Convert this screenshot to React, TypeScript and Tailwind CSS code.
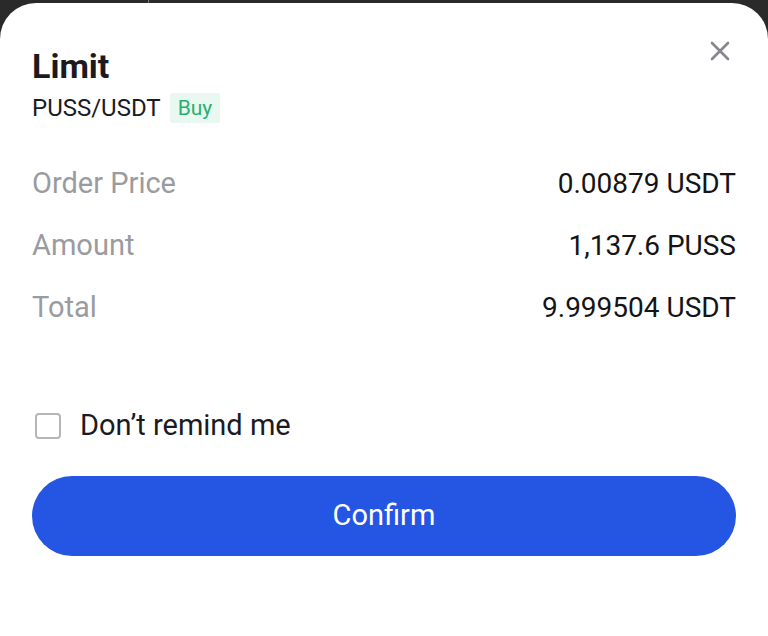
import React from "react";

export default function App() {
  const rows = [
    { label: "Order Price", value: "0.00879 USDT" },
    { label: "Amount", value: "1,137.6 PUSS" },
    { label: "Total", value: "9.999504 USDT" },
  ];
  return (
    <div
      className="relative w-[768px] h-[636px] bg-[#2a2a2a] overflow-hidden"
      style={{ fontFamily: "Roboto, 'Noto Sans', sans-serif" }}
    >
      <div className="absolute left-[148px] top-0 w-[1px] h-[3px] bg-[#777]" />
      <div className="mt-[3px] h-[633px] bg-white rounded-t-[36px] px-[32px] pt-[43px] flex flex-col">
        <div className="flex items-start justify-between">
          <div className="flex flex-col">
            <div className="text-[34px] leading-[40px] font-bold text-[#1b1b1f]">Limit</div>
            <div className="flex items-center mt-[7px] gap-[9px]">
              <span className="text-[24px] leading-[30px] text-[#1b1b1f]">PUSS/USDT</span>
              <span className="bg-[#e9f8f0] text-[#27b070] text-[21px] leading-[30px] px-[8px] rounded-[3px]">
                Buy
              </span>
            </div>
          </div>
          <svg
            width="20"
            height="20"
            viewBox="0 0 20 20"
            className="mt-[-5px] mr-[6px]"
            stroke="#86878d"
            strokeWidth="2.6"
            strokeLinecap="round"
          >
            <path d="M2 2 L18 18 M18 2 L2 18" />
          </svg>
        </div>

        <div className="flex flex-col mt-[43px] gap-[26px]">
          {rows.map((r) => (
            <div key={r.label} className="flex items-center justify-between h-[36px]">
              <span className="text-[29px] text-[#9a9ba1]">{r.label}</span>
              <span className="text-[28px] text-[#141417]">{r.value}</span>
            </div>
          ))}
        </div>

        <div className="flex items-center mt-[85px] gap-[19px] h-[30px]">
          <div className="ml-[3px] w-[26px] h-[26px] rounded-[4px] border-[2px] border-[#b5b6ba]" />
          <span className="text-[29px] text-[#1b1b1f]">Don’t remind me</span>
        </div>

        <button className="mt-[35px] h-[80px] w-full rounded-full bg-[#2555e3] text-white text-[29px]">
          Confirm
        </button>
      </div>
    </div>
  );
}
